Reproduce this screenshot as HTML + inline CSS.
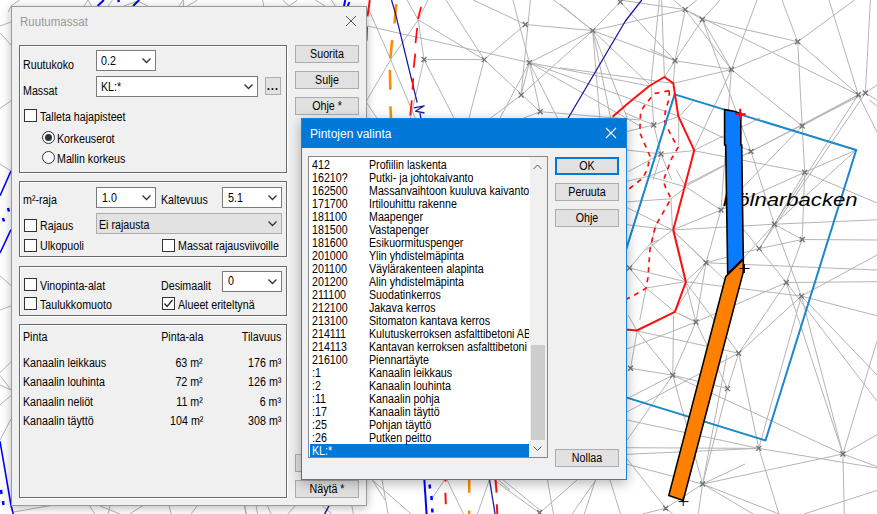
<!DOCTYPE html>
<html><head><meta charset="utf-8"><style>
html,body{margin:0;padding:0;width:877px;height:514px;overflow:hidden;background:#fff;}
body{position:relative;font-family:"Liberation Sans",sans-serif;}
.abs{position:absolute;}
#map{position:absolute;left:0;top:0;}
.dlg{position:absolute;background:#f0f0f0;border:1px solid #9a9a9a;box-shadow:0 2px 9px rgba(0,0,0,0.28);}
.dlg2{position:absolute;background:#f0f0f0;border:1px solid #1883d7;box-shadow:0 3px 12px rgba(0,0,0,0.3);}
.t{position:absolute;font-size:12px;line-height:13px;color:#000;white-space:nowrap;transform:scaleX(0.89);transform-origin:0 0;}
.t.r{transform-origin:100% 0;}
.t{margin-top:1px;}
.t.c{margin-top:0;}
.t.gray{color:#999;}
.t.c{text-align:center;transform-origin:50% 0;}
.grp{position:absolute;border:1px solid #6a6a6a;box-shadow:inset 1px 1px 0 #fff, 1px 1px 0 #fff;}
.combo{position:absolute;border:1px solid #7a7a7a;background:#fff;}
.combo.dis{background:#e2e2e2;border-color:#adadad;}
.btn{position:absolute;border:1px solid #adadad;background:#e1e1e1;}
.btn.def{border:2px solid #0078d7;}
.chk{position:absolute;width:11px;height:11px;border:1px solid #333;background:#fff;}
.radio{position:absolute;width:11px;height:11px;border:1px solid #333;border-radius:50%;background:#fff;}
.radio.on::after{content:"";position:absolute;left:2px;top:2px;width:7px;height:7px;border-radius:50%;background:#333;}

</style></head><body>
<svg id="map" width="877" height="514">
<g fill="none" stroke="#b4b4b4" stroke-width="1">
<polyline points="368.0,8.0 390.7,59.6 411.7,109.8 416.0,120.0"/>
<polyline points="366.0,25.7 529.3,62.6"/>
<polyline points="407.0,0.0 418.3,19.9"/>
<polyline points="428.0,0.0 418.3,19.9"/>
<polyline points="418.3,19.9 484.2,59.6"/>
<polyline points="418.3,19.9 424.0,59.5"/>
<polyline points="424.0,59.5 484.2,59.6"/>
<polyline points="424.0,59.5 410.0,120.0"/>
<polyline points="424.0,59.5 455.0,120.0"/>
<polyline points="418.3,19.9 390.7,59.6"/>
<polyline points="390.7,59.6 366.0,101.6"/>
<polyline points="366.0,101.6 378.0,120.0"/>
<polyline points="446.0,0.0 484.2,59.6"/>
<polyline points="473.2,0.0 525.3,24.5"/>
<polyline points="512.9,0.0 529.3,62.6"/>
<polyline points="530.4,0.0 521.1,95.1"/>
<polyline points="525.3,24.5 592.7,30.6"/>
<polyline points="525.3,24.5 484.2,59.6"/>
<polyline points="484.2,59.6 540.2,111.7"/>
<polyline points="484.2,59.6 468.5,120.0"/>
<polyline points="529.3,62.6 521.1,95.1"/>
<polyline points="521.1,95.1 488.0,120.0"/>
<polyline points="529.3,62.6 499.0,120.0"/>
<polyline points="529.3,62.6 592.7,30.6"/>
<polyline points="529.3,62.6 649.3,86.0"/>
<polyline points="529.3,62.6 679.2,116.4"/>
<polyline points="529.3,62.6 640.0,126.0"/>
<polyline points="529.3,62.6 540.2,111.7"/>
<polyline points="529.3,62.6 558.5,120.0"/>
<polyline points="521.1,95.1 592.7,30.6"/>
<polyline points="540.2,111.7 518.7,120.0"/>
<polyline points="540.2,111.7 640.0,120.0"/>
<polyline points="553.8,0.0 592.7,30.6"/>
<polyline points="592.7,30.6 560.0,4.0"/>
<polyline points="592.7,30.6 620.3,2.0"/>
<polyline points="592.7,30.6 675.0,60.7"/>
<polyline points="592.7,30.6 685.2,9.6"/>
<polyline points="592.7,30.6 611.0,120.0"/>
<polyline points="592.7,30.6 628.0,120.0"/>
<polyline points="592.7,30.6 649.0,84.0"/>
<polyline points="592.7,30.6 600.0,120.0"/>
<polyline points="560.0,67.8 673.3,83.4"/>
<polyline points="619.6,0.0 685.2,9.6"/>
<polyline points="620.3,2.0 675.0,60.7"/>
<polyline points="659.3,0.0 651.0,84.0 653.8,125.0"/>
<polyline points="661.6,0.0 664.4,77.0"/>
<polyline points="673.4,0.0 685.2,9.6"/>
<polyline points="696.7,0.0 685.2,9.6"/>
<polyline points="720.0,0.0 702.3,19.5"/>
<polyline points="685.2,9.6 702.3,19.5"/>
<polyline points="685.2,9.6 675.0,60.7"/>
<polyline points="685.2,9.6 731.4,69.5"/>
<polyline points="702.3,19.5 675.0,60.7"/>
<polyline points="702.3,19.5 797.7,41.7"/>
<polyline points="702.3,19.5 731.4,69.5"/>
<polyline points="702.3,19.5 751.0,151.5"/>
<polyline points="675.0,60.7 650.0,49.0"/>
<polyline points="675.0,60.7 664.4,77.0"/>
<polyline points="675.0,60.7 673.3,83.4"/>
<polyline points="675.0,60.7 731.4,69.5"/>
<polyline points="731.4,69.5 673.3,83.4"/>
<polyline points="731.4,69.5 693.5,150.6"/>
<polyline points="731.4,69.5 721.0,210.0"/>
<polyline points="797.7,41.7 782.0,0.0"/>
<polyline points="797.7,41.7 854.5,0.0"/>
<polyline points="797.7,41.7 802.2,126.0"/>
<polyline points="797.7,41.7 731.4,69.5"/>
<polyline points="797.7,41.7 858.3,94.8"/>
<polyline points="685.2,9.6 858.3,94.8"/>
<polyline points="757.0,0.0 731.4,69.5"/>
<polyline points="731.4,69.5 802.2,126.0"/>
<polyline points="802.2,126.0 858.3,94.8"/>
<polyline points="829.0,0.0 858.3,94.8"/>
<polyline points="870.4,0.0 865.4,93.0"/>
<polyline points="858.3,94.8 774.4,224.2 740.0,262.0"/>
<polyline points="865.4,93.0 759.2,248.6"/>
<polyline points="865.4,93.0 877.0,85.0"/>
<polyline points="865.4,93.0 877.0,100.0"/>
<polyline points="858.3,94.8 877.0,132.0"/>
<polyline points="869.0,100.0 877.0,106.0"/>
<polyline points="858.3,94.8 686.0,186.0"/>
<polyline points="865.4,93.0 686.0,184.5"/>
<polyline points="802.2,126.0 804.7,172.3"/>
<polyline points="804.7,172.3 802.2,239.5"/>
<polyline points="693.5,150.6 804.7,172.3"/>
<polyline points="804.7,172.3 877.0,203.0"/>
<polyline points="774.4,224.2 877.0,219.8"/>
<polyline points="774.4,224.2 802.2,239.5"/>
<polyline points="759.2,248.6 774.4,224.2"/>
<polyline points="751.0,151.5 774.4,224.2"/>
<polyline points="804.7,172.3 774.4,224.2"/>
<polyline points="721.0,210.0 804.7,172.3"/>
<polyline points="804.7,172.3 856.2,150.0"/>
<polyline points="856.2,150.0 774.4,224.2"/>
<polyline points="759.2,248.6 802.2,239.5"/>
<polyline points="802.2,239.5 877.0,240.0"/>
<polyline points="735.0,219.0 759.2,248.6 786.3,282.5 877.0,401.0"/>
<polyline points="786.3,282.5 877.0,281.7"/>
<polyline points="786.3,282.5 696.0,322.0"/>
<polyline points="786.3,282.5 802.2,239.5"/>
<polyline points="786.3,282.5 738.7,353.2"/>
<polyline points="786.3,282.5 842.9,454.0"/>
<polyline points="685.4,281.7 801.4,296.1 877.0,315.8"/>
<polyline points="801.4,296.1 877.0,255.0"/>
<polyline points="801.4,296.1 738.7,353.2"/>
<polyline points="801.4,296.1 758.8,448.4"/>
<polyline points="774.4,224.2 801.4,296.1 842.9,454.0"/>
<polyline points="801.4,296.1 877.0,375.0"/>
<polyline points="738.7,353.2 758.8,448.4"/>
<polyline points="758.8,448.4 779.0,514.0"/>
<polyline points="758.8,448.4 877.0,468.0"/>
<polyline points="672.8,375.2 842.9,454.0 877.0,466.6"/>
<polyline points="842.9,454.0 877.0,341.0"/>
<polyline points="842.9,454.0 877.0,434.7"/>
<polyline points="702.6,484.0 842.9,454.0"/>
<polyline points="842.9,454.0 844.3,514.0"/>
<polyline points="702.6,484.0 779.0,514.0"/>
<polyline points="804.0,514.0 877.0,490.4"/>
<polyline points="653.8,125.0 625.0,113.0"/>
<polyline points="653.8,125.0 625.0,132.0"/>
<polyline points="653.8,125.0 661.0,154.0"/>
<polyline points="653.8,125.0 679.2,116.4"/>
<polyline points="661.0,154.0 625.0,149.8"/>
<polyline points="661.0,154.0 693.5,150.6"/>
<polyline points="678.7,117.0 678.7,145.0"/>
<polyline points="661.0,154.0 628.0,171.7"/>
<polyline points="661.0,154.0 653.0,180.0"/>
<polyline points="661.0,154.0 671.7,180.0"/>
<polyline points="693.5,150.6 760.0,118.0"/>
<polyline points="679.2,116.4 694.3,100.0"/>
<polyline points="681.0,117.0 751.0,151.5"/>
<polyline points="625.0,181.7 649.1,176.2 665.5,170.0"/>
<polyline points="648.4,176.2 686.0,187.0"/>
<polyline points="686.0,187.0 721.0,210.0"/>
<polyline points="686.0,187.0 671.0,198.8"/>
<polyline points="676.4,170.0 686.0,187.0"/>
<polyline points="625.0,202.0 671.0,198.8"/>
<polyline points="671.0,198.8 672.5,230.0"/>
<polyline points="625.0,206.6 672.5,230.0"/>
<polyline points="627.0,224.7 672.5,230.0"/>
<polyline points="672.5,230.0 774.4,224.2"/>
<polyline points="672.5,230.0 721.0,210.0"/>
<polyline points="672.5,230.0 646.0,250.0"/>
<polyline points="656.2,224.5 650.7,244.8"/>
<polyline points="672.5,230.0 727.0,282.0"/>
<polyline points="721.0,210.0 706.0,262.8"/>
<polyline points="721.0,210.0 802.2,126.0"/>
<polyline points="658.5,240.0 650.7,243.1 629.5,268.0"/>
<polyline points="650.7,243.1 685.4,281.7"/>
<polyline points="629.5,268.0 685.4,281.7"/>
<polyline points="629.5,268.0 646.0,288.0 674.5,311.7"/>
<polyline points="646.0,288.0 685.4,281.7"/>
<polyline points="646.0,288.0 639.8,320.0"/>
<polyline points="685.4,281.7 706.0,262.8"/>
<polyline points="685.4,281.7 696.0,322.0"/>
<polyline points="685.4,281.7 738.7,353.2"/>
<polyline points="672.5,230.0 706.0,262.8"/>
<polyline points="706.0,262.8 759.2,248.6"/>
<polyline points="706.0,262.8 877.0,270.0"/>
<polyline points="706.0,262.8 696.0,322.0"/>
<polyline points="706.0,262.8 674.5,311.7"/>
<polyline points="674.5,311.7 696.0,322.0"/>
<polyline points="672.5,230.0 685.4,281.7"/>
<polyline points="628.0,315.0 637.1,331.0"/>
<polyline points="637.1,331.0 630.5,368.3"/>
<polyline points="637.1,331.0 672.8,375.2"/>
<polyline points="637.1,331.0 738.7,353.2"/>
<polyline points="673.6,315.0 672.8,375.2"/>
<polyline points="696.0,322.0 672.8,375.2"/>
<polyline points="696.0,322.0 681.4,315.0"/>
<polyline points="627.0,349.0 696.0,322.0"/>
<polyline points="630.5,368.3 672.8,375.2 727.5,388.6"/>
<polyline points="672.8,375.2 702.6,484.0"/>
<polyline points="627.0,398.7 672.8,375.2"/>
<polyline points="619.0,416.0 738.7,353.2"/>
<polyline points="727.5,388.6 738.7,353.2"/>
<polyline points="727.5,388.6 702.6,484.0"/>
<polyline points="696.0,322.0 727.5,388.6"/>
<polyline points="627.0,420.0 758.8,448.4"/>
<polyline points="627.0,447.7 758.8,448.4"/>
<polyline points="627.0,454.3 758.8,448.4"/>
<polyline points="627.0,440.0 672.8,375.2"/>
<polyline points="627.0,464.3 702.6,484.0"/>
<polyline points="627.0,458.8 665.7,508.2"/>
<polyline points="665.7,508.2 702.6,484.0"/>
<polyline points="665.7,508.2 642.7,514.0"/>
<polyline points="665.7,508.2 672.7,514.0"/>
<polyline points="702.6,484.0 727.0,355.0"/>
<polyline points="702.6,484.0 745.0,464.0"/>
<polyline points="702.6,484.0 780.0,530.0"/>
<polyline points="702.6,484.0 698.2,514.0"/>
<polyline points="84.0,6.0 88.0,0.0 91.4,6.0"/>
<polyline points="108.0,6.0 112.5,0.0"/>
<polyline points="123.9,6.0 137.5,1.0 147.8,6.0"/>
<polyline points="178.8,6.0 183.4,0.0 183.4,6.0"/>
<polyline points="187.4,6.0 197.6,0.0"/>
<polyline points="263.8,6.0 262.5,0.0"/>
<polyline points="282.6,0.0 288.9,6.0 297.6,0.0"/>
<polyline points="315.2,0.0 325.2,6.0"/>
<polyline points="331.5,0.0 335.3,6.0"/>
<polyline points="8.2,12.0 11.0,6.0 19.8,0.0"/>
<polyline points="0.0,26.0 11.0,22.0"/>
<polyline points="0.0,32.8 11.0,45.0"/>
<polyline points="0.0,108.4 11.0,100.8"/>
<polyline points="0.0,164.0 11.0,171.0"/>
<polyline points="0.0,275.9 11.0,285.5"/>
<polyline points="0.0,310.0 11.0,305.9"/>
<polyline points="0.0,372.7 11.0,361.8"/>
<polyline points="0.0,375.4 11.0,390.0"/>
<polyline points="0.0,385.0 11.0,390.0"/>
<polyline points="0.0,404.8 11.0,395.6"/>
<polyline points="0.0,440.0 11.0,419.0"/>
<polyline points="14.0,512.0 53.3,505.0"/>
<polyline points="89.0,505.0 94.8,514.0"/>
<polyline points="97.8,505.0 120.0,514.0"/>
<polyline points="110.4,505.0 108.1,514.0"/>
<polyline points="143.7,505.0 129.6,514.0"/>
<polyline points="168.9,505.0 171.1,514.0"/>
<polyline points="197.8,505.0 191.1,514.0"/>
<polyline points="244.4,505.0 245.9,514.0"/>
<polyline points="244.8,505.0 246.4,514.0"/>
<polyline points="256.0,505.0 257.6,514.0"/>
<polyline points="267.1,505.0 271.1,514.0"/>
<polyline points="295.9,505.0 287.9,514.0"/>
<polyline points="321.4,505.0 331.8,514.0"/>
<polyline points="351.8,505.0 353.3,514.0"/>
<polyline points="366.0,470.0 385.0,500.0"/>
<polyline points="371.2,479.0 411.2,514.0"/>
<polyline points="381.9,479.0 388.1,514.0"/>
<polyline points="445.0,479.0 431.0,500.0"/>
<polyline points="446.6,479.0 463.5,514.0"/>
<polyline points="489.7,479.0 477.4,514.0"/>
<polyline points="497.4,479.0 510.0,490.0"/>
<polyline points="494.0,480.0 539.6,513.0"/>
<polyline points="502.0,479.0 541.0,511.0"/>
<polyline points="547.3,479.0 553.5,514.0"/>
<polyline points="578.1,479.0 539.6,513.0"/>
<polyline points="596.6,479.0 572.0,514.0"/>
<polyline points="595.8,479.0 584.3,514.0"/>
<polyline points="609.7,479.0 620.5,514.0"/>
</g>
<g fill="none" stroke="#707070" stroke-width="1.3">
<path d="M421.5 57.0l5 5m0 -5l-5 5"/>
<path d="M522.8 22.0l5 5m0 -5l-5 5"/>
<path d="M590.2 28.1l5 5m0 -5l-5 5"/>
<path d="M481.7 57.1l5 5m0 -5l-5 5"/>
<path d="M526.8 60.1l5 5m0 -5l-5 5"/>
<path d="M518.6 92.6l5 5m0 -5l-5 5"/>
<path d="M537.7 109.2l5 5m0 -5l-5 5"/>
<path d="M617.8 -0.5l5 5m0 -5l-5 5"/>
<path d="M682.7 7.1l5 5m0 -5l-5 5"/>
<path d="M699.8 17.0l5 5m0 -5l-5 5"/>
<path d="M672.5 58.2l5 5m0 -5l-5 5"/>
<path d="M728.9 67.0l5 5m0 -5l-5 5"/>
<path d="M651.3 122.5l5 5m0 -5l-5 5"/>
<path d="M795.2 39.2l5 5m0 -5l-5 5"/>
<path d="M855.8 92.3l5 5m0 -5l-5 5"/>
<path d="M862.9 90.5l5 5m0 -5l-5 5"/>
<path d="M799.7 123.5l5 5m0 -5l-5 5"/>
<path d="M748.5 149.0l5 5m0 -5l-5 5"/>
<path d="M802.2 169.8l5 5m0 -5l-5 5"/>
<path d="M771.9 221.7l5 5m0 -5l-5 5"/>
<path d="M799.7 237.0l5 5m0 -5l-5 5"/>
<path d="M756.7 246.1l5 5m0 -5l-5 5"/>
<path d="M658.5 151.5l5 5m0 -5l-5 5"/>
<path d="M718.5 207.5l5 5m0 -5l-5 5"/>
<path d="M703.5 260.3l5 5m0 -5l-5 5"/>
<path d="M627.0 265.5l5 5m0 -5l-5 5"/>
<path d="M783.8 280.0l5 5m0 -5l-5 5"/>
<path d="M798.9 293.6l5 5m0 -5l-5 5"/>
<path d="M693.5 319.5l5 5m0 -5l-5 5"/>
<path d="M736.2 350.7l5 5m0 -5l-5 5"/>
<path d="M628.0 365.8l5 5m0 -5l-5 5"/>
<path d="M670.3 372.7l5 5m0 -5l-5 5"/>
<path d="M725.0 386.1l5 5m0 -5l-5 5"/>
<path d="M537.1 510.0l5 5m0 -5l-5 5"/>
<path d="M756.3 445.9l5 5m0 -5l-5 5"/>
<path d="M840.4 451.5l5 5m0 -5l-5 5"/>
<path d="M700.1 481.5l5 5m0 -5l-5 5"/>
<path d="M663.2 505.7l5 5m0 -5l-5 5"/>
</g>
<g fill="none" stroke-linejoin="round">
<!-- colored -->
<polyline points="97.6,6 103.9,0" stroke="#0000ff" stroke-width="2"/>
<polyline points="118.2,0 119,2" stroke="#0000ff" stroke-width="2.5"/>
<polyline points="133,6 139.2,0" stroke="#0000ff" stroke-width="2"/>
<polyline points="344,6 345.3,0" stroke="#0000ff" stroke-width="2"/>
<polyline points="347.8,6 349.3,2" stroke="#0000ff" stroke-width="2"/>
<polyline points="11,171 0,195.7" stroke="#0000ff" stroke-width="1.6"/>
<polyline points="8,208 9,211.5" stroke="#0000ff" stroke-width="2.5"/>
<polyline points="3,218 4,221.5" stroke="#0000ff" stroke-width="2.5"/>
<polyline points="11,229.7 0,253" stroke="#0000ff" stroke-width="1.6"/>
<polyline points="0,441.3 11,505.2 13.3,514" stroke="#0000ff" stroke-width="1.6"/>
<polyline points="1,490 1.5,494" stroke="#0000ff" stroke-width="2.5"/>
<polyline points="3,501 3.5,505" stroke="#0000ff" stroke-width="2.5"/>
<polyline points="329.4,505 324.6,514" stroke="#1a1aa0" stroke-width="1.5"/>
<polyline points="424.3,479 426.6,514" stroke="#0000ff" stroke-width="2"/>
<path d="M429.5 484.5 L430 488.5 M431.3 496 L431.8 500 M432.1 508.5 L432.5 512.5" stroke="#0000ff" stroke-width="2.5"/>
<path d="M445.4 479 L445.5 481.5 M445.4 492.7 L445.8 504.2" stroke="#ff1010" stroke-width="2"/>
<path d="M469.2 479 L469.2 492.7 M469.2 510.4 L469.2 514" stroke="#ff8c00" stroke-width="2.5"/>
<polyline points="489.4,479 495.1,514" stroke="#1a1aa0" stroke-width="1.3"/>
<path d="M495.5 479 L496.6 492.7 M496.8 504.2 L497.3 514" stroke="#ff1010" stroke-width="2"/>

<polyline points="669.2,90.7 654.3,93.5 645.2,104.7 640.6,111.7 639.8,132.7 645.2,145.2 649.9,156 647.6,168.5 642.9,177.9 634.3,184.8 625,192" stroke="#ff1010" stroke-width="1.7" stroke-dasharray="5,5"/>
<polyline points="669.2,90.7 669.2,98 665.2,112 664.7,121.8 671.7,136.6 678,147.5 671.7,158.4 663.2,180.9 665.5,187.1 671,198.8 667.8,204.3 655.4,226.1 650,249.3 648,277.4 646,288.3 642.1,290.6 631.2,296.9 625,300" stroke="#ff1010" stroke-width="1.7" stroke-dasharray="5,5"/>
<path d="M369.8 0L367.5 16.3M367 26.8L366.5 40.8" stroke="#ff1010" stroke-width="2"/>
<path d="M396.2 4.2L394.5 23.3M392.2 40.1L390.3 58.3M389.9 70L390.3 89.8M390.4 106.2L391 118" stroke="#ff8c00" stroke-width="2.6"/>
<polyline points="391.5,0 395,11.7 417.2,102.7" stroke="#1a1aa0" stroke-width="1.3"/>
<path d="M413.7 107.8L424.2 105.8L415.5 111.2L424.5 113M420 113L421 119" stroke="#1a1aa0" stroke-width="1.3"/>
<path d="M421.1 7L417.9 19.1M417.2 28L415.5 43.2M415.3 53.7L413.7 67.7M413.2 78.2L412.5 89.8M411.8 100.3L410.2 115.5" stroke="#ff1010" stroke-width="1.8"/>
<polyline points="641.8,0 625.4,21 567,120" stroke="#1a1aa0" stroke-width="1.3"/>
<polygon points="674.6,94.4 856.2,150 765.5,440.5 583.9,384.4" stroke="#1a88c9" stroke-width="2"/>
<polyline points="612.6,116.8 627.8,103.6 649.3,86 664.4,77 673.3,83.4 678.3,116.2 694.2,150.4 673.3,229.8 685.9,281.9 674.9,311.8 636.8,330.5 620,329" stroke="#ff1010" stroke-width="2"/>
</g>
<text x="722.5" y="205.7" font-family="Liberation Sans" font-style="italic" font-size="18.5" textLength="135" lengthAdjust="spacingAndGlyphs" fill="#000">Kölnarbacken</text>
<polygon points="724.6,109.6 734.2,111.2 739.7,113.2 740.8,113.2 740.8,145 741.7,145 743.3,258.7 727.7,273.5 725.7,145 724.6,145" fill="#0a7bff" stroke="#000" stroke-width="1.6"/>
<polygon points="725.7,276.6 743.3,259.5 743.3,272 683.2,500.4 668.8,495.4" fill="#ff8000" stroke="#000" stroke-width="1.6"/>
<path d="M734.7 114.3h11M740.2 108.8v11" stroke="#ff0000" stroke-width="2"/>
<path d="M739.5 268.5h10M744.4 264v9" stroke="#000" stroke-width="1"/>
<path d="M678.5 501.6h10M683.2 497v9" stroke="#000" stroke-width="1"/>
</svg>
<!-- LEFT DIALOG -->
<div id="dlg1" class="dlg" style="left:11px;top:6px;width:354px;height:498px;">
</div>
<div class="abs t gray" style="left:20px;top:16px;font-size:12px;transform:scaleX(0.96);margin-top:-0.5px">Ruutumassat</div>
<svg class="abs" style="left:345px;top:15px" width="12" height="12"><path d="M1 1 L11 11 M11 1 L1 11" stroke="#555" stroke-width="1"/></svg>

<div class="grp" style="left:19px;top:45px;width:266px;height:126px;"></div>
<div class="t" style="left:23px;top:58px;">Ruutukoko</div>
<div class="combo" style="left:96px;top:50px;width:58px;height:19px;"></div>
<div class="t" style="left:101px;top:54px;">0.2</div>
<svg class="abs" style="left:142px;top:58px" width="10" height="6"><path d="M0.5 0.5 L4.5 4.5 L8.5 0.5" stroke="#333" stroke-width="1.3" fill="none"/></svg>
<div class="t" style="left:23px;top:84px;">Massat</div>
<div class="combo" style="left:96px;top:76px;width:160px;height:19px;"></div>
<div class="t" style="left:101px;top:80px;">KL:*</div>
<svg class="abs" style="left:244px;top:84px" width="10" height="6"><path d="M0.5 0.5 L4.5 4.5 L8.5 0.5" stroke="#333" stroke-width="1.3" fill="none"/></svg>
<div class="btn" style="left:265px;top:77px;width:14px;height:16px;"></div>
<svg class="abs" style="left:266px;top:87px" width="13" height="4"><circle cx="2.5" cy="2" r="1.1" fill="#111"/><circle cx="6.5" cy="2" r="1.1" fill="#111"/><circle cx="10.5" cy="2" r="1.1" fill="#111"/></svg>
<div class="chk" style="left:24px;top:109px;"></div>
<div class="t" style="left:40px;top:110px;">Talleta hajapisteet</div>
<div class="radio on" style="left:42px;top:131px;"></div>
<div class="t" style="left:57px;top:132px;">Korkeuserot</div>
<div class="radio" style="left:42px;top:151px;"></div>
<div class="t" style="left:57px;top:152px;">Mallin korkeus</div>

<div class="grp" style="left:19px;top:181px;width:266px;height:74px;"></div>
<div class="t" style="left:23px;top:193px;">m²-raja</div>
<div class="combo" style="left:96px;top:187px;width:58px;height:19px;"></div>
<div class="t" style="left:102px;top:191px;">1.0</div>
<svg class="abs" style="left:142px;top:195px" width="10" height="6"><path d="M0.5 0.5 L4.5 4.5 L8.5 0.5" stroke="#333" stroke-width="1.3" fill="none"/></svg>
<div class="t" style="left:161px;top:193px;">Kaltevuus</div>
<div class="combo" style="left:222px;top:187px;width:58px;height:19px;"></div>
<div class="t" style="left:228px;top:191px;">5.1</div>
<svg class="abs" style="left:268px;top:195px" width="10" height="6"><path d="M0.5 0.5 L4.5 4.5 L8.5 0.5" stroke="#333" stroke-width="1.3" fill="none"/></svg>
<div class="chk" style="left:24px;top:219px;"></div>
<div class="t" style="left:40px;top:219px;">Rajaus</div>
<div class="combo dis" style="left:96px;top:213px;width:184px;height:19px;"></div>
<div class="t" style="left:99px;top:218px;">Ei rajausta</div>
<svg class="abs" style="left:268px;top:221px" width="10" height="6"><path d="M0.5 0.5 L4.5 4.5 L8.5 0.5" stroke="#333" stroke-width="1.3" fill="none"/></svg>
<div class="chk" style="left:24px;top:239px;"></div>
<div class="t" style="left:40px;top:239px;">Ulkopuoli</div>
<div class="chk" style="left:162px;top:239px;"></div>
<div class="t" style="left:178px;top:239px;">Massat rajausviivoille</div>

<div class="grp" style="left:19px;top:266px;width:266px;height:48px;"></div>
<div class="chk" style="left:24px;top:278px;"></div>
<div class="t" style="left:40px;top:279px;">Vinopinta-alat</div>
<div class="t" style="left:161px;top:279px;">Desimaalit</div>
<div class="combo" style="left:222px;top:271px;width:58px;height:19px;"></div>
<div class="t" style="left:228px;top:274px;">0</div>
<svg class="abs" style="left:268px;top:279px" width="10" height="6"><path d="M0.5 0.5 L4.5 4.5 L8.5 0.5" stroke="#333" stroke-width="1.3" fill="none"/></svg>
<div class="chk" style="left:24px;top:297px;"></div>
<div class="t" style="left:40px;top:298px;">Taulukkomuoto</div>
<div class="chk" style="left:162px;top:297px;"></div>
<svg class="abs" style="left:162px;top:297px" width="13" height="13"><path d="M2.5 6.5 L5 9.5 L10.5 3" stroke="#222" stroke-width="1.2" fill="none"/></svg>
<div class="t" style="left:178px;top:298px;">Alueet eriteltynä</div>

<div class="grp" style="left:19px;top:324px;width:266px;height:172px;"></div>
<div class="t" style="left:23px;top:330px;">Pinta</div>
<div class="t r" style="right:674px;top:330px;">Pinta-ala</div>
<div class="t r" style="right:596px;top:330px;">Tilavuus</div>
<div class="t" style="left:23px;top:356px;">Kanaalin leikkaus</div>
<div class="t r" style="right:674px;top:356px;">63 m²</div>
<div class="t r" style="right:596px;top:356px;">176 m³</div>
<div class="t" style="left:23px;top:375px;">Kanaalin louhinta</div>
<div class="t r" style="right:674px;top:375px;">72 m²</div>
<div class="t r" style="right:596px;top:375px;">126 m³</div>
<div class="t" style="left:23px;top:395px;">Kanaalin neliöt</div>
<div class="t r" style="right:674px;top:395px;">11 m²</div>
<div class="t r" style="right:596px;top:395px;">6 m³</div>
<div class="t" style="left:23px;top:414px;">Kanaalin täyttö</div>
<div class="t r" style="right:674px;top:414px;">104 m²</div>
<div class="t r" style="right:596px;top:414px;">308 m³</div>

<div class="btn" style="left:295px;top:45px;width:62px;height:16px;"></div>
<div class="t c" style="left:295px;top:48px;width:64px;">Suorita</div>
<div class="btn" style="left:295px;top:71px;width:62px;height:16px;"></div>
<div class="t c" style="left:295px;top:74px;width:64px;">Sulje</div>
<div class="btn" style="left:295px;top:97px;width:62px;height:16px;"></div>
<div class="t c" style="left:295px;top:100px;width:64px;">Ohje *</div>
<div class="btn" style="left:295px;top:454px;width:62px;height:16px;"></div>
<div class="btn" style="left:295px;top:480px;width:62px;height:16px;"></div>
<div class="t c" style="left:295px;top:483px;width:64px;">Näytä *</div>

<!-- POPUP -->
<div class="dlg2" style="left:301px;top:118px;width:324px;height:360px;"></div>
<div class="abs" style="left:302px;top:119px;width:324px;height:29px;background:#0078d7;"></div>
<div class="t" style="left:310px;top:127px;font-size:12px;color:#fff;transform:none;">Pintojen valinta</div>
<svg class="abs" style="left:605px;top:127px" width="12" height="12"><path d="M1 1 L11 11 M11 1 L1 11" stroke="#fff" stroke-width="1.1"/></svg>
<div class="abs" style="left:308px;top:156px;width:238px;height:300px;border:1px solid #828790;background:#fff;"></div>
<div class="abs" style="left:530px;top:157px;width:17px;height:300px;background:#f0f0f0;"></div>
<div class="abs" style="left:531px;top:345px;width:14px;height:95px;background:#cdcdcd;"></div>
<svg class="abs" style="left:533px;top:164px" width="10" height="6"><path d="M0.5 5 L4.5 1 L8.5 5" stroke="#555" fill="none"/></svg>
<svg class="abs" style="left:533px;top:446px" width="10" height="6"><path d="M0.5 0.5 L4.5 4.5 L8.5 0.5" stroke="#555" fill="none"/></svg>
<div class="abs" style="left:310px;top:444px;width:219px;height:13px;background:#0078d7;"></div>
<div id="list" class="abs" style="left:312px;top:158px;">
<div class="t" style="left:0;top:0px;color:#000">412</div>
<div class="t" style="left:57px;top:0px;width:180px;overflow:hidden">Profiilin laskenta</div>
<div class="t" style="left:0;top:13px;color:#000">16210?</div>
<div class="t" style="left:57px;top:13px;width:180px;overflow:hidden">Putki- ja johtokaivanto</div>
<div class="t" style="left:0;top:26px;color:#000">162500</div>
<div class="t" style="left:57px;top:26px;width:180px;overflow:hidden">Massanvaihtoon kuuluva kaivanto</div>
<div class="t" style="left:0;top:39px;color:#000">171700</div>
<div class="t" style="left:57px;top:39px;width:180px;overflow:hidden">Irtilouhittu rakenne</div>
<div class="t" style="left:0;top:52px;color:#000">181100</div>
<div class="t" style="left:57px;top:52px;width:180px;overflow:hidden">Maapenger</div>
<div class="t" style="left:0;top:65px;color:#000">181500</div>
<div class="t" style="left:57px;top:65px;width:180px;overflow:hidden">Vastapenger</div>
<div class="t" style="left:0;top:78px;color:#000">181600</div>
<div class="t" style="left:57px;top:78px;width:180px;overflow:hidden">Esikuormituspenger</div>
<div class="t" style="left:0;top:91px;color:#000">201000</div>
<div class="t" style="left:57px;top:91px;width:180px;overflow:hidden">Ylin yhdistelmäpinta</div>
<div class="t" style="left:0;top:104px;color:#000">201100</div>
<div class="t" style="left:57px;top:104px;width:180px;overflow:hidden">Väylärakenteen alapinta</div>
<div class="t" style="left:0;top:117px;color:#000">201200</div>
<div class="t" style="left:57px;top:117px;width:180px;overflow:hidden">Alin yhdistelmäpinta</div>
<div class="t" style="left:0;top:130px;color:#000">211100</div>
<div class="t" style="left:57px;top:130px;width:180px;overflow:hidden">Suodatinkerros</div>
<div class="t" style="left:0;top:143px;color:#000">212100</div>
<div class="t" style="left:57px;top:143px;width:180px;overflow:hidden">Jakava kerros</div>
<div class="t" style="left:0;top:156px;color:#000">213100</div>
<div class="t" style="left:57px;top:156px;width:180px;overflow:hidden">Sitomaton kantava kerros</div>
<div class="t" style="left:0;top:169px;color:#000">214111</div>
<div class="t" style="left:57px;top:169px;width:180px;overflow:hidden">Kulutuskerroksen asfalttibetoni AB</div>
<div class="t" style="left:0;top:182px;color:#000">214113</div>
<div class="t" style="left:57px;top:182px;width:180px;overflow:hidden">Kantavan kerroksen asfalttibetoni</div>
<div class="t" style="left:0;top:195px;color:#000">216100</div>
<div class="t" style="left:57px;top:195px;width:180px;overflow:hidden">Piennartäyte</div>
<div class="t" style="left:0;top:208px;color:#000">:1</div>
<div class="t" style="left:57px;top:208px;width:180px;overflow:hidden">Kanaalin leikkaus</div>
<div class="t" style="left:0;top:221px;color:#000">:2</div>
<div class="t" style="left:57px;top:221px;width:180px;overflow:hidden">Kanaalin louhinta</div>
<div class="t" style="left:0;top:234px;color:#000">:11</div>
<div class="t" style="left:57px;top:234px;width:180px;overflow:hidden">Kanaalin pohja</div>
<div class="t" style="left:0;top:247px;color:#000">:17</div>
<div class="t" style="left:57px;top:247px;width:180px;overflow:hidden">Kanaalin täyttö</div>
<div class="t" style="left:0;top:260px;color:#000">:25</div>
<div class="t" style="left:57px;top:260px;width:180px;overflow:hidden">Pohjan täyttö</div>
<div class="t" style="left:0;top:273px;color:#000">:26</div>
<div class="t" style="left:57px;top:273px;width:180px;overflow:hidden">Putken peitto</div>
<div class="t" style="left:0;top:286px;color:#fff">KL:*</div>
</div>
<div class="btn def" style="left:555px;top:157px;width:60px;height:14px;"></div>
<div class="t c" style="left:555px;top:160px;width:64px;">OK</div>
<div class="btn" style="left:555px;top:183px;width:62px;height:16px;"></div>
<div class="t c" style="left:555px;top:186px;width:64px;">Peruuta</div>
<div class="btn" style="left:555px;top:209px;width:62px;height:16px;"></div>
<div class="t c" style="left:555px;top:212px;width:64px;">Ohje</div>
<div class="btn" style="left:555px;top:449px;width:62px;height:16px;"></div>
<div class="t c" style="left:555px;top:452px;width:64px;">Nollaa</div>

</body></html>
